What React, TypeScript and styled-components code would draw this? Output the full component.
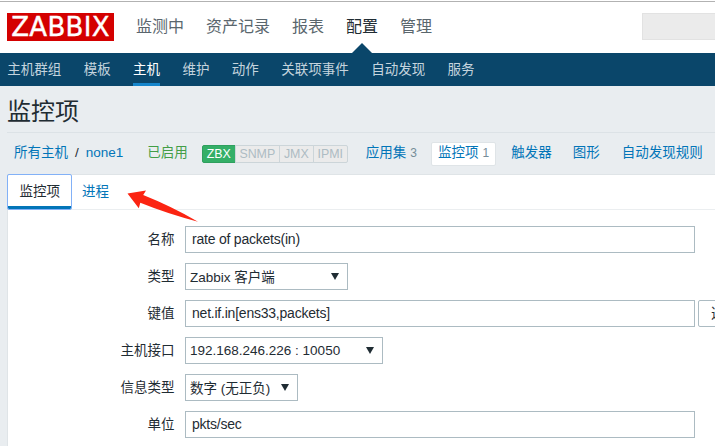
import React from "react";
import styled, { createGlobalStyle } from "styled-components";

const Global = createGlobalStyle`
  * { box-sizing: border-box; }
  body {
    margin: 0;
    overflow: hidden;
    background: #e9edf0;
    color: #1f2c33;
    font: 13.5px/20px "Liberation Sans", "Noto Sans CJK SC", sans-serif;
  }
`;

const Page = styled.div`
  width: 715px;
  height: 446px;
  overflow: hidden;
  position: relative;
`;

const Header = styled.header`
  display: flex;
  height: 53px;
  padding: 11px 0 0 7px;
  background: linear-gradient(#fff 0 1px, #b2b2b2 1px 2px, #fff 2px);
`;

const Logo = styled.div`
  width: 107px;
  height: 28px;
  margin-top: 2px;
  flex: none;
  background: #d40000;
  color: #fff;
  text-align: center;
  font: 26px/28px "DejaVu Sans", sans-serif;
  letter-spacing: 0.3px;
  -webkit-text-stroke: 0.4px #fff;
`;

const MainMenu = styled.nav`
  display: flex;
  gap: 22px;
  margin-left: 22px;
`;

const MainItem = styled.a<{ $active?: boolean }>`
  position: relative;
  height: 42px;
  font-size: 16px;
  line-height: 31px;
  color: ${(p) => (p.$active ? "#1f2c33" : "#5a666d")};
  ${(p) =>
    p.$active &&
    `&::after {
      content: "";
      position: absolute;
      left: 50%;
      bottom: 0;
      margin-left: -10px;
      border: 10px solid transparent;
      border-top: 0;
      border-bottom-color: #0a466a;
    }`}
`;

const Search = styled.div`
  width: 80px;
  height: 27px;
  margin: 2px -7px 0 auto;
  flex: none;
  background: #ebebeb;
  border: 1px solid #e2e2e2;
`;

const SubMenu = styled.nav`
  display: flex;
  gap: 22.4px;
  height: 33px;
  padding-left: 7.3px;
  background: #0a466a;
`;

const SubItem = styled.a<{ $active?: boolean }>`
  height: 33px;
  line-height: 33px;
  white-space: nowrap;
  color: ${(p) => (p.$active ? "#fff" : "#c5d4de")};
  border-bottom: 3px solid ${(p) => (p.$active ? "#1585cb" : "transparent")};
`;

const Title = styled.h1`
  height: 47px;
  margin: 0 0 0 7px;
  border-bottom: 1px solid #dce2e6;
  font-size: 24px;
  font-weight: 400;
  line-height: 51px;
`;

const Crumbs = styled.div`
  display: flex;
  align-items: center;
  height: 41px;
  padding-left: 14px;
  white-space: nowrap;
`;

const Crumb = styled.a<{ $gap?: number; $color?: string }>`
  margin: -2px 0 0 ${(p) => p.$gap ?? 0}px;
  color: ${(p) => p.$color ?? "#0275b8"};
`;

const Count = styled.sup`
  margin-left: 4px;
  color: #768d99;
  font-size: 12px;
  line-height: 1;
  vertical-align: baseline;
`;

const Selected = styled.span`
  height: 24px;
  margin-left: 14px;
  padding: 0 6px;
  background: #fff;
  border: 1px solid #dfe4e7;
  border-radius: 2px;
  line-height: 20px;
`;

const Badges = styled.div`
  display: flex;
  height: 18px;
  margin: 1px 0 0 14px;
`;

const Badge = styled.span<{ $w: number; $on?: boolean }>`
  display: flex;
  justify-content: center;
  width: ${(p) => p.$w}px;
  height: 18px;
  border: 1px solid ${(p) => (p.$on ? "#2f9f5e" : "#ccd5d9")};
  margin-right: -1px;
  background: ${(p) => (p.$on ? "#34af67" : "#ebebeb")};
  color: ${(p) => (p.$on ? "#fff" : "#aebcc3")};
  font-size: 12.4px;
  line-height: 17px;
  &:first-child { border-radius: 2px 0 0 2px; }
  &:last-child { border-radius: 0 2px 2px 0; }
`;

const Panel = styled.main`
  height: 280px;
  margin-left: 7px;
  background: #fff;
  border: 1px solid #dfe4e7;
  border-right: 0;
`;

const Tabs = styled.div`
  display: flex;
  height: 35px;
  border-bottom: 1px solid #ebeef0;
`;

const Tab = styled.a<{ $active?: boolean }>`
  height: 35px;
  line-height: 33px;
  padding: 0 11px;
  color: #0275b8;
  ${(p) =>
    p.$active &&
    `width: 63px;
     height: 34px;
     padding: 0 0 0 11.5px;
     color: #1f2c33;
     border-bottom: 3px solid #0275b8;
     outline: 1.5px solid #82b1f7;
     outline-offset: 0;
     border-radius: 1px;`}
`;

const Form = styled.form`
  display: grid;
  gap: 10px;
  padding-top: 16px;
`;

const Row = styled.div`
  display: flex;
  height: 27px;
`;

const Label = styled.label`
  width: 166.5px;
  margin-right: 10.5px;
  flex: none;
  text-align: right;
  line-height: 27px;
`;

const Field = styled.div`
  width: 510px;
  height: 27px;
  flex: none;
  border: 1px solid #acbbc2;
  padding-left: 6px;
  font-size: 14px;
  letter-spacing: -0.22px;
  line-height: 25px;
`;

const Select = styled.div<{ $w: number; $drop?: number }>`
  display: flex;
  justify-content: space-between;
  width: ${(p) => p.$w}px;
  height: 27px;
  border: 1px solid #acbbc2;
  padding: 0 8px 0 4px;
  line-height: ${(p) => 25 + (p.$drop ?? 0)}px;
`;

const Caret = styled.i`
  width: 8px;
  height: 7px;
  margin-top: 9px;
  background: #1f2c33;
  clip-path: polygon(0 0, 100% 0, 50% 100%);
`;

const PickButton = styled.button`
  width: 60px;
  height: 27px;
  flex: none;
  margin: 0 0 0 3px;
  padding: 0 0 0 12px;
  border: 1px solid #acbbc2;
  border-radius: 2px;
  background: #fff;
  color: #1f2c33;
  font: inherit;
  text-align: left;
`;

const Arrow = styled.svg`
  position: absolute;
  left: 120px;
  top: 180px;
`;

const mainMenu = ["监测中", "资产记录", "报表", "配置", "管理"];
const subMenu = ["主机群组", "模板", "主机", "维护", "动作", "关联项事件", "自动发现", "服务"];

export default function App() {
  return (
    <Page>
      <Global />
      <Header>
        <Logo>ZABBIX</Logo>
        <MainMenu>
          {mainMenu.map((t) => (
            <MainItem key={t} $active={t === "配置"}>{t}</MainItem>
          ))}
        </MainMenu>
        <Search />
      </Header>
      <SubMenu>
        {subMenu.map((t) => (
          <SubItem key={t} $active={t === "主机"}>{t}</SubItem>
        ))}
      </SubMenu>
      <Title>监控项</Title>
      <Crumbs>
        <Crumb>所有主机</Crumb>
        <Crumb $gap={7} $color="#1f2c33">/</Crumb>
        <Crumb $gap={7}>none1</Crumb>
        <Crumb $gap={24} $color="#429e47">已启用</Crumb>
        <Badges>
          <Badge $w={34} $on>ZBX</Badge>
          <Badge $w={45}>SNMP</Badge>
          <Badge $w={35}>JMX</Badge>
          <Badge $w={35}>IPMI</Badge>
        </Badges>
        <Crumb $gap={19}>应用集<Count>3</Count></Crumb>
        <Selected><Crumb>监控项<Count>1</Count></Crumb></Selected>
        <Crumb $gap={15}>触发器</Crumb>
        <Crumb $gap={21}>图形</Crumb>
        <Crumb $gap={22}>自动发现规则</Crumb>
      </Crumbs>
      <Panel>
        <Tabs>
          <Tab $active>监控项</Tab>
          <Tab>进程</Tab>
        </Tabs>
        <Form>
          <Row><Label>名称</Label><Field>rate of packets(in)</Field></Row>
          <Row><Label>类型</Label><Select $w={163} $drop={2}>Zabbix 客户端<Caret /></Select></Row>
          <Row><Label>键值</Label><Field>net.if.in[ens33,packets]</Field><PickButton type="button">选择</PickButton></Row>
          <Row><Label>主机接口</Label><Select $w={198}>192.168.246.226 : 10050<Caret /></Select></Row>
          <Row><Label>信息类型</Label><Select $w={113} $drop={2}>数字 (无正负)<Caret /></Select></Row>
          <Row><Label>单位</Label><Field>pkts/sec</Field></Row>
        </Form>
      </Panel>
      <Arrow width="90" height="50" viewBox="0 0 90 50">
        <path d="M7.5 13.6 26 10.4 23.2 15 Q52 26.5 78 41.7 Q48 34 20.3 22.8L18.8 28.2Z" fill="#fb2412" />
      </Arrow>
    </Page>
  );
}
